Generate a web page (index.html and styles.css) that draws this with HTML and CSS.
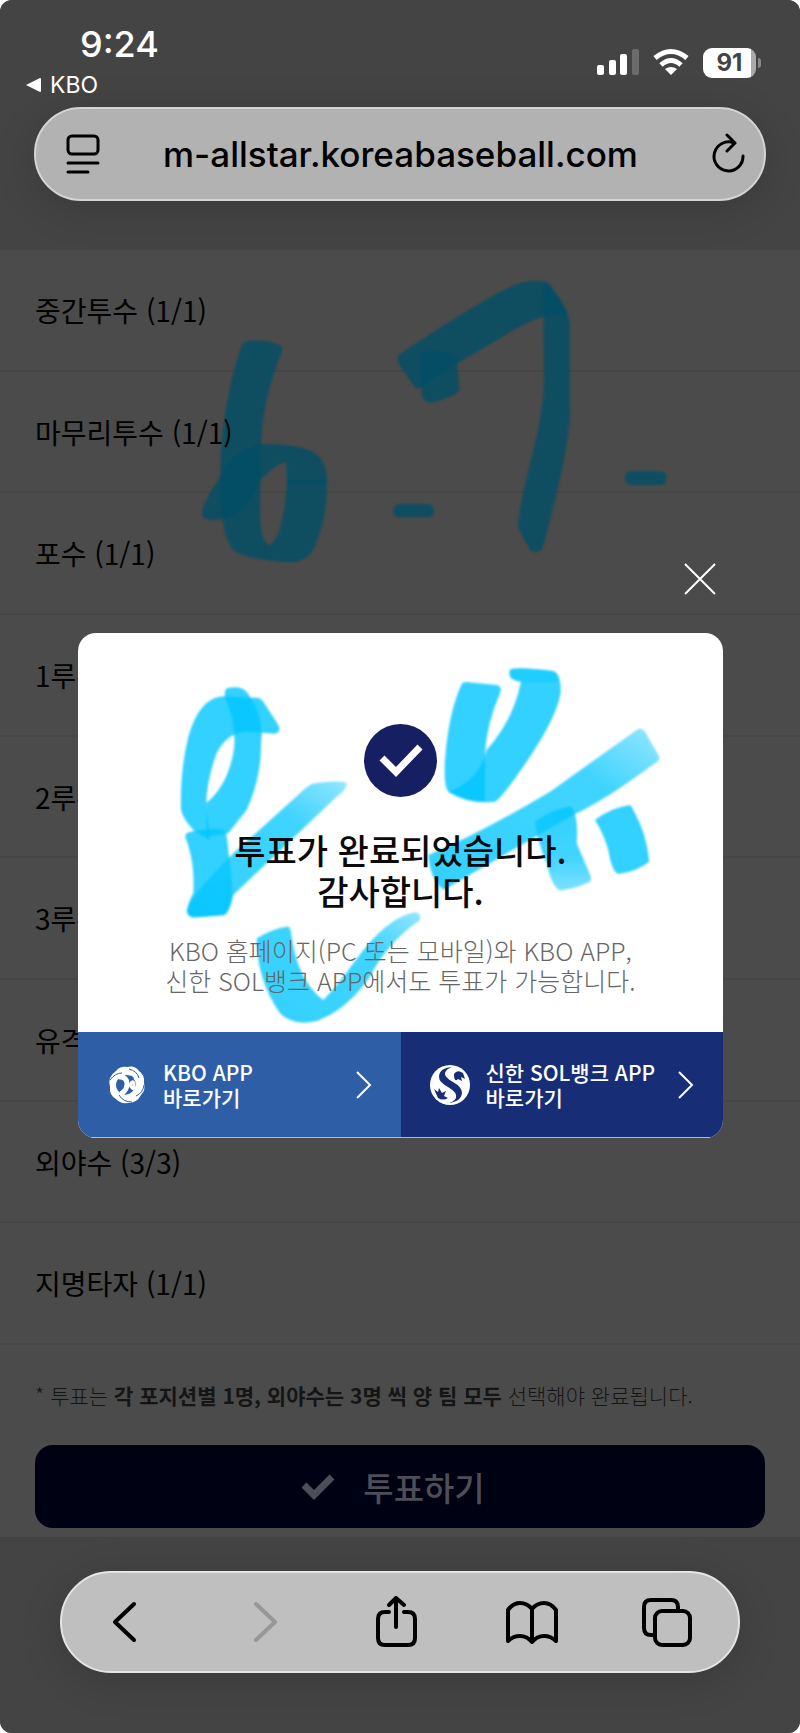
FILE: index.html
```html
<!DOCTYPE html>
<html lang="ko">
<head>
    <meta charset="UTF-8">
    <meta name="viewport" content="width=device-width, initial-scale=1.0">
    <title>KBO 올스타 투표</title>
    <link rel="stylesheet" href="styles.css">
</head>
<body>
    <div class="screen">
        <header class="top">
            <div class="status">
                <div class="status-left">
                    <span class="time">9:24</span>
                    <a href="#" class="back-app">
                        <svg width="16" height="16" viewBox="0 0 16 16"><path d="M0 8 14 1Q15 1 15 2V14Q15 15 14 15Z" fill="#fff"/></svg>
                        KBO
                    </a>
                </div>
                <div class="status-right">
                    <svg width="42" height="28" viewBox="0 0 42 28" fill="#fff">
                        <rect x="0" y="17" width="7" height="10" rx="2"/>
                        <rect x="12" y="12" width="7" height="15" rx="2"/>
                        <rect x="23" y="6" width="7" height="21" rx="2"/>
                        <rect x="35" y="1" width="7" height="26" rx="2" fill="#6c6c6c"/>
                    </svg>
                    <svg width="36" height="28" viewBox="0 0 36 28" fill="none" stroke="#fff" stroke-width="5">
                        <path d="M2 10Q18-3 34 10"/>
                        <path d="M8 17Q18 8 28 17"/>
                        <path d="M18 27 12 21Q18 17 24 21Z" fill="#fff" stroke="none"/>
                    </svg>
                    <span class="battery">91</span>
                </div>
            </div>
            <div class="address">
                <button type="button" aria-label="페이지 메뉴">
                    <svg width="36" height="42" viewBox="0 0 36 42" fill="none" stroke="#000" stroke-width="3" stroke-linecap="round">
                        <rect x="3" y="3" width="30" height="18" rx="4"/>
                        <path d="M3 30H33M3 39H23"/>
                    </svg>
                </button>
                <span class="url">m-allstar.koreabaseball.com</span>
                <button type="button" aria-label="새로고침">
                    <svg width="36" height="42" viewBox="0 0 36 42" fill="none" stroke="#000" stroke-width="3" stroke-linecap="round" stroke-linejoin="round">
                        <path d="M33 23A14.500 14.500 0 1 1 24 10"/>
                        <path d="M17 2 25 10 17 18"/>
                    </svg>
                </button>
            </div>
        </header>

        <main class="vote">
            <svg class="memo" viewBox="0 0 2400 1140" fill="#004f66">
                <path d="M735 275Q790 265 840 285Q850 292 844 310Q785 450 782 600L780 800Q785 885 810 885Q850 860 862 690L980 690Q985 800 940 900Q915 937 870 937Q740 930 700 900Q660 850 662 700Q655 500 725 285Z"/>
                <path d="M980 700Q985 620 920 598Q870 582 780 582Q690 600 655 690Q600 770 608 800Q620 815 662 808Q740 800 780 690Q830 640 858 635L862 700Z"/>
                <g transform="translate(1110 0)">
                    <path d="M85 315Q330 150 440 102Q500 85 530 97L595 190Q520 190 440 235L270 335 150 415Q140 420 130 405L82 335Z"/>
                    <path d="M520 100Q530 90 540 105Q600 180 600 230V480Q600 560 560 730L518 895Q500 915 480 900L445 835Q440 800 490 600Q520 480 522 400Z"/>
                    <path d="M150 310Q200 290 260 320L268 420Q260 440 180 458Q150 450 155 420Z"/>
                    <rect x="70" y="762" width="122" height="40" rx="18"/>
                    <rect x="765" y="663" width="124" height="42" rx="18"/>
                </g>
            </svg>
            <ul class="positions">
                <li><span>중간투수 (1/1)</span></li>
                <li><span>마무리투수 (1/1)</span></li>
                <li><span>포수 (1/1)</span></li>
                <li><span>1루수 (1/1)</span></li>
                <li><span>2루수 (1/1)</span></li>
                <li><span>3루수 (1/1)</span></li>
                <li><span>유격수 (1/1)</span></li>
                <li><span>외야수 (3/3)</span></li>
                <li><span>지명타자 (1/1)</span></li>
            </ul>
            <p class="note">* 투표는 <b>각 포지션별 1명, 외야수는 3명 씩 양 팀 모두</b> 선택해야 완료됩니다.</p>
            <button type="button" class="vote-btn">
                <svg width="34" height="26" viewBox="0 0 34 26" fill="none" stroke="#4e4e58" stroke-width="7"><path d="M3 11 13 21 31 3"/></svg>
                투표하기
            </button>
        </main>

        <footer class="bottom">
            <nav class="toolbar">
                <button type="button" aria-label="뒤로">
                    <svg width="56" height="56" viewBox="0 0 56 56"><path d="M36 10 17 28 36 46"/></svg>
                </button>
                <button type="button" aria-label="앞으로" disabled>
                    <svg width="56" height="56" viewBox="0 0 56 56"><path d="M23 10 42 28 23 46"/></svg>
                </button>
                <button type="button" aria-label="공유">
                    <svg width="56" height="56" viewBox="0 0 56 56">
                        <path d="M21 18H17Q10 18 10 25V44Q10 51 17 51H40Q47 51 47 44V25Q47 18 40 18H36"/>
                        <path d="M28 33V4M21 11 28 4 36 11"/>
                    </svg>
                </button>
                <button type="button" aria-label="책갈피">
                    <svg width="56" height="56" viewBox="0 0 56 56">
                        <path d="M29 15Q24 9 17 9T5 16V47Q10 42 17 42T29 48Q34 42 41 42T53 47V16Q48 9 41 9T29 15V48"/>
                    </svg>
                </button>
                <button type="button" aria-label="탭">
                    <svg width="56" height="56" viewBox="0 0 56 56">
                        <path d="M16 41H13Q6 41 6 34V13Q6 6 13 6H33Q40 6 40 13V16"/>
                        <rect x="17" y="17" width="35" height="34" rx="7"/>
                    </svg>
                </button>
            </nav>
        </footer>

        <div class="layer">
            <button type="button" class="close" aria-label="닫기">
                <svg width="32" height="32" viewBox="0 0 32 32" stroke="#fff" stroke-width="2"><path d="M1 1 31 31M31 1 1 31"/></svg>
            </button>
            <section class="popup" role="dialog" aria-labelledby="popup-title">
                <div class="popup-body">
                    <svg class="memo" viewBox="54 39 1935 1197" fill="#00c5ff">
                        <defs>
                            <linearGradient id="fade-up" x1="0" y1="1" x2="1" y2="0">
                                <stop offset="0" stop-color="#00c5ff"/>
                                <stop offset="0.700" stop-color="#10caff"/>
                                <stop offset="1" stop-color="#7bdfff"/>
                            </linearGradient>
                            <linearGradient id="fade-down" x1="0" y1="0" x2="0" y2="1">
                                <stop offset="0" stop-color="#00c5ff"/>
                                <stop offset="0.600" stop-color="#10caff"/>
                                <stop offset="1" stop-color="#60d9ff"/>
                            </linearGradient>
                        </defs>
                        <path d="M500 228Q420 225 385 350Q360 450 363 570Q370 600 405 635L450 660 438 560Q440 480 470 400Q500 340 555 335L645 341Q665 335 655 315L610 245Q600 228 570 234Z"/>
                        <path d="M500 205Q540 195 560 215Q615 290 603 370Q605 470 560 570L505 640 440 650 438 550Q500 500 520 400Q530 340 510 270Q485 220 500 205Z"/>
                        <path d="M375 650Q378 635 400 634Q450 625 490 628 500 630 505 690 515 760 518 820 510 870 495 885 400 895 385 885 375 865 400 820 405 720 375 650Z"/>
                        <path fill="url(#fade-up)" d="M380 870Q390 830 520 700L720 520Q740 500 755 492Q830 480 860 488Q860 510 830 530L520 825Q510 880 490 885L400 893Q380 890 380 870Z"/>
                        <path fill="url(#fade-up)" d="M590 955Q640 925 680 920Q690 918 693 935Q710 1080 790 1140Q830 1100 880 1030Q980 890 1065 877Q1085 878 1080 900Q980 970 930 1070Q860 1170 770 1203Q700 1220 660 1180Q590 1080 590 955Z"/>
                        <g transform="translate(930 0)">
                            <path d="M275 192Q280 185 290 186L380 195Q395 198 392 215Q350 310 345 400V543Q280 545 235 515Q220 500 225 420Q235 280 275 192Z"/>
                            <path d="M420 150Q430 138 550 153Q575 165 572 220Q560 290 480 410Q400 530 375 545Q300 555 235 515Q330 480 350 390Q430 300 453 185Q410 180 420 150Z"/>
                            <path d="M420 150Q430 138 550 153Q570 160 568 185Q500 190 453 185Q410 180 420 150Z" opacity="0.5"/>
                            <path fill="url(#fade-up)" d="M175 705Q330 640 540 515L800 330Q815 320 825 335L868 410Q870 422 855 430Q700 545 600 590L230 805Q220 812 210 800Q180 770 175 705Z"/>
                            <path fill="url(#fade-down)" d="M495 605Q540 570 595 560Q608 558 611 575Q625 600 620 670L663 770Q665 785 650 790 610 808 570 812 545 800 530 730 500 660 495 605Z"/>
                            <path d="M675 600Q720 565 775 556Q785 554 790 570Q830 640 838 725Q800 755 745 762Q725 755 715 690Q700 640 675 600Z"/>
                        </g>
                    </svg>
                    <svg class="badge" width="73" height="73" viewBox="0 0 73 73">
                        <circle cx="36.500" cy="36.500" r="36.500" fill="#171f63"/>
                        <path d="M18 34 32 48 56 23" fill="none" stroke="#fff" stroke-width="7"/>
                    </svg>
                    <h1 id="popup-title">투표가 완료되었습니다.<br>감사합니다.</h1>
                    <p>KBO 홈페이지(PC 또는 모바일)와 KBO APP,<br>신한 SOL뱅크 APP에서도 투표가 가능합니다.</p>
                </div>
                <div class="links">
                    <a href="#" class="kbo">
                        <svg width="40" height="40" viewBox="0 0 40 40">
                            <path d="M9 6Q13 1 20 2Q28 0 32 6Q38 10 37 18Q39 25 34 30Q30 38 21 38Q13 39 9 34Q2 30 3 22Q0 12 9 6Z" fill="#fff"/>
                            <ellipse cx="20" cy="20" rx="11" ry="10" fill="#2e5fa6"/>
                            <g fill="none" stroke="#fff" stroke-linecap="round">
                                <path d="M13 12Q20 12 20 19Q20 25 15 28" stroke-width="5"/>
                                <path d="M27 22Q27 14 24 18Q22 22 28 25" stroke-width="3"/>
                                <path d="M28 13Q32 18 29 24Q26 30 20 31" stroke-width="3"/>
                            </g>
                            <g fill="none" stroke="#2e5fa6" stroke-width="1">
                                <path d="M3 15Q8 8 15 8M22 4Q30 6 32 13M37 20Q36 28 29 31M25 37Q16 37 12 30"/>
                            </g>
                        </svg>
                        <span>KBO APP<br>바로가기</span>
                        <svg class="arrow" width="16" height="28" viewBox="0 0 16 28"><path d="M1 1 14 14 1 27"/></svg>
                    </a>
                    <a href="#" class="sol">
                        <svg width="40" height="40" viewBox="0 0 40 40">
                            <circle cx="20" cy="20" r="20" fill="#fff"/>
                            <g fill="#172d75">
                                <path d="M22 2Q9 3 9 12Q9 17 18 22Q28 28 26 33Q24 38 15 38Q31 38 32 28Q32 22 23 17Q14 12 15 8Q16 4 22 2Z"/>
                                <path d="M24 9Q27 4 33 8L35 14 31 12 32 16 28 14Q24 18 24 9Z"/>
                                <path d="M4 24 8 27 9 23 12 28 16 26 14 31 18 33Q13 36 8 33Z"/>
                            </g>
                        </svg>
                        <span>신한 SOL뱅크 APP<br>바로가기</span>
                        <svg class="arrow" width="16" height="28" viewBox="0 0 16 28"><path d="M1 1 14 14 1 27"/></svg>
                    </a>
                </div>
            </section>
        </div>
    </div>
</body>
</html>
```
FILE: styles.css
```css
body,h1,p,ul,li{margin:0;padding:0;}
ul{list-style:none;}
a{text-decoration:none;color:inherit;}
button{padding:0;border:none;background:none;font:inherit;color:inherit;cursor:pointer;}
svg{display:block;flex-shrink:0;}
*{box-sizing:border-box;}

body{
    background-color:#fff;
    font-family:"Noto Sans CJK KR",sans-serif;
}
.screen{
    overflow:hidden;
    position:relative;
    display:flex;
    flex-direction:column;
    min-height:100vh;
    border-radius:12px;
    background-color:#4b4b4b;
}

/* 상단 */
.top{
    height:250px;
    padding:23px 34px 0;
    background-color:#444;
    font-family:Inter,sans-serif;
}
.status{
    display:flex;
    justify-content:space-between;
    height:84px;
    color:#fff;
}
.status-left{
    margin-left:-8px;
}
.time{
    display:block;
    padding-left:54px;
    font-size:36px;
    font-weight:500;
    line-height:42px;
}
.back-app{
    display:flex;
    align-items:center;
    gap:8px;
    font-size:23px;
    font-weight:400;
    line-height:40px;
}
.status-right{
    display:flex;
    gap:14px;
    padding:25px 10px 0 0;
}
.battery{
    position:relative;
    width:53px;
    height:30px;
    border-radius:9px;
    background:linear-gradient(90deg,#fff 91%,#aaa 91%);
    color:#444;
    font-size:24px;
    font-weight:700;
    line-height:30px;
    text-align:center;
}
.battery::after{
    content:"";
    position:absolute;
    top:10px;
    right:-5px;
    width:3px;
    height:10px;
    border-radius:0 3px 3px 0;
    background-color:#888;
}
.address{
    display:flex;
    align-items:center;
    height:94px;
    padding:0 18px 0 29px;
    border:2px solid #d4d4d4;
    border-radius:47px;
    background-color:#b2b2b2;
    box-shadow:0 8px 40px rgba(0,0,0,.15);
}
.url{
    flex:1;
    padding-right:10px;
    color:#000;
    font-size:35px;
    font-weight:500;
    text-align:center;
}

/* 포지션 목록 */
.vote{
    position:relative;
    flex:1;
    display:flex;
    flex-direction:column;
    padding-bottom:9px;
    color:#000;
}
.memo{
    position:absolute;
    top:0;
    left:0;
    width:100%;
    filter:blur(1px);
}
.memo path,.memo rect{
    fill-opacity:.8;
}
.positions{
    flex:1;
    display:flex;
    flex-direction:column;
}
.positions li{
    flex:1;
    display:flex;
    align-items:center;
    padding:0 35px;
    border-bottom:2px solid #464646;
    font-size:28px;
    font-weight:400;
}
.positions span,.note{
    position:relative;
}
.note{
    padding:33px 35px;
    color:#151515;
    font-size:21px;
    font-weight:300;
    line-height:34px;
}
.note b{
    font-weight:700;
}
.vote-btn{
    display:flex;
    align-items:center;
    justify-content:center;
    gap:28px;
    height:83px;
    margin:0 35px;
    padding-right:14px;
    border-radius:18px;
    background-color:#000112;
    color:#4e4e58;
    font-size:33px;
    font-weight:500;
    line-height:40px;
}

/* 하단 */
.bottom{
    height:196px;
    padding:34px 60px 0;
    background-color:#444;
}
.toolbar{
    display:flex;
    align-items:center;
    justify-content:space-between;
    height:102px;
    padding:0 44px 0 36px;
    border:2px solid #e4e4e4;
    border-radius:51px;
    background-color:#bfbfbf;
    box-shadow:0 8px 40px rgba(0,0,0,.15);
}
.toolbar svg{
    fill:none;
    stroke:#000;
    stroke-width:4;
    stroke-linecap:round;
    stroke-linejoin:round;
}
.toolbar button:disabled svg{
    stroke:#979797;
}

/* 투표 완료 팝업 */
.layer{
    position:absolute;
    top:0;
    right:0;
    bottom:0;
    left:0;
    display:flex;
    flex-direction:column;
    justify-content:center;
    padding:0 77px 32px 78px;
}
.close{
    align-self:flex-end;
    margin:0 7px 38px 0;
}
.popup{
    overflow:hidden;
    border-radius:18px;
    background-color:#fff;
}
.popup-body{
    position:relative;
    padding:91px 0 37px;
    text-align:center;
}
.badge{
    position:relative;
    margin:0 auto 32px;
}
.popup h1{
    position:relative;
    color:#0a0a0a;
    font-size:34px;
    font-weight:500;
    line-height:41px;
}
.popup p{
    position:relative;
    margin-top:24px;
    color:#666;
    font-size:25px;
    font-weight:300;
    line-height:30px;
}
.links{
    display:flex;
    border-bottom:1px solid #a9b7d4;
}
.links a{
    flex:1 1 0;
    display:flex;
    align-items:center;
    gap:16px;
    height:105px;
    padding:0 29px;
    color:#fff;
    font-size:21px;
    font-weight:500;
    line-height:25px;
    white-space:nowrap;
}
.links .kbo{
    background-color:#2e5fa6;
}
.links .sol{
    background-color:#172d75;
}
.links .arrow{
    margin-left:auto;
    fill:none;
    stroke:#fff;
    stroke-width:2;
}
```
